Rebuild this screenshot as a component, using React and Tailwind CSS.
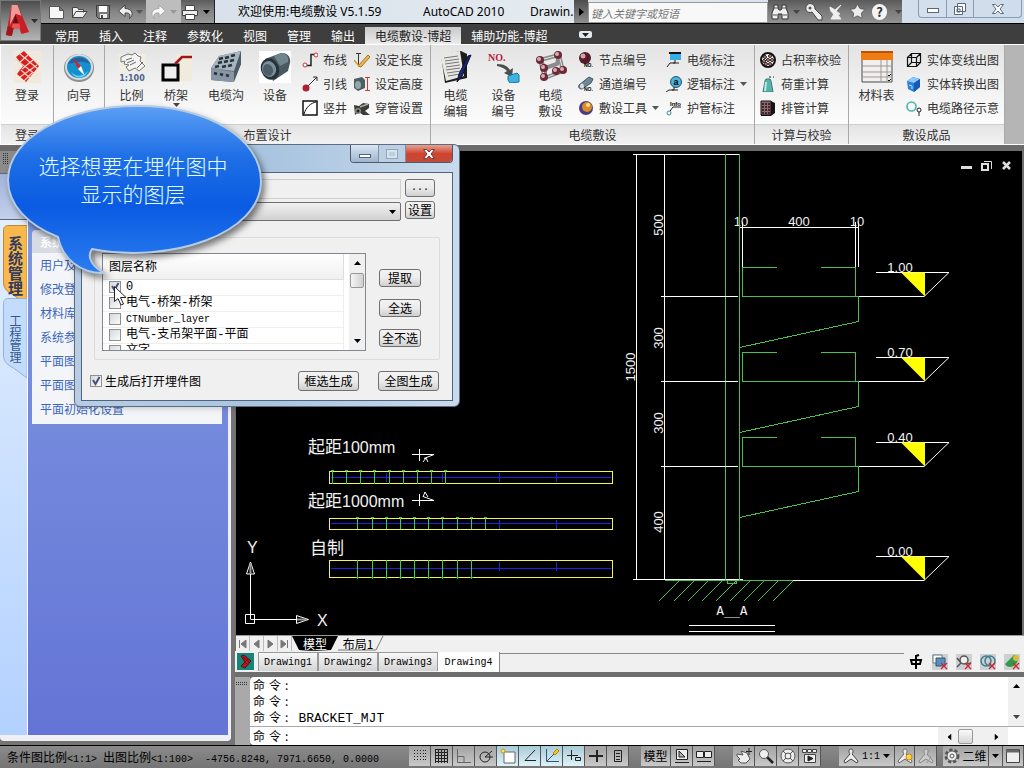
import { useState } from "react";
import { Star } from "lucide-react";

/* ---------- toolbar glyphs ---------- */

const Caret = ({ className = "fill-[#444]" }) => (
    <svg viewBox="0 0 7 4" className={`w-[7px] h-1 shrink-0 ${className}`}>
        <path d="M0 0h7L3.5 4z" />
    </svg>
);

const quickIcons = {
    new: <path d="M1.5 3.5h10l4 4v8h-14zM11.5 3.5v4h4" fill="#f6f6f6" stroke="#555" />,
    open: <path d="M1.5 14.5v-10h5l1 2h5v3M1.5 14.5l3.5-6h11l-4 6z" fill="#eee" stroke="#444" />,
    save: (
        <g>
            <path d="M2.5 2.5h13v13h-11l-2-2z" fill="#7a7a7a" stroke="#3c3c3c" />
            <path d="M5 3h8v6H5z" fill="#fff" />
            <path d="M6 11h7v4H6z" fill="#eee" />
            <path d="M7 12h2v3H7z" fill="#444" />
        </g>
    ),
    undo: <path d="M8 2L1.5 8 8 13.500V10c4-.5 6 1 4.500 5.500 5-4 2.500-10-4.500-10z" fill="#eee" stroke="#444" />,
    redo: <path d="M10 2l6.500 6-6.500 5.500V10c-4-.5-6 1-4.500 5.500-5-4-2.500-10 4.500-10z" fill="#f8f8f8" stroke="#a5a5a5" />,
    print: (
        <g stroke="#444">
            <path d="M4.5 2.5h9v5h-9z" fill="#fff" />
            <path d="M1.5 7.500h15v5h-15z" fill="#eee" />
            <path d="M4.5 11.5h9v5h-9z" fill="#fff" />
        </g>
    ),
};

const QuickButton = ({ name, className = "" }) => (
    <button type="button" aria-label={name} className={`h-full flex items-center ${className}`}>
        <svg viewBox="0 0 18 18" className="size-[18px]">{quickIcons[name]}</svg>
    </button>
);

/* ---------- ribbon icons ---------- */

const bigIcons = {
    login: (
        <g>
            <path d="M3 0h27v32H3z" fill="#f1eadc" />
            <path d="M5 6l8-6 15 15-13 16-9-8 6-8z" fill="#d81e1e" />
            <path d="M4 8l20 15M9 3l18 15M17 4L8 12M22 9L11 18M26 14L9 26M22 21l-9 9M10 19l9 8" stroke="#f6d5c8" strokeWidth="1.2" fill="none" />
        </g>
    ),
    guide: (
        <g>
            <ellipse cx="16" cy="17" rx="15" ry="14" fill="#8d8f8e" />
            <ellipse cx="16" cy="16" rx="14" ry="13" fill="#d5dcdb" />
            <ellipse cx="16" cy="16" rx="12" ry="11" fill="#1590cf" />
            <path d="M5 13a12 11 0 0 1 22 0c-8-4-15-2-22 0z" fill="#2a5f99" />
            <path d="M10 7l8 8-3 3z" fill="#d8232a" />
            <path d="M22 25l-4-10-3 3z" fill="#fff" />
            <path d="M8 21c5 5 12 5 17-1-3 8-13 9-17 1z" fill="#6ad0f2" />
        </g>
    ),
    ratio: (
        <g>
            <path d="M3 3h27v18H3z" fill="#f1ede2" />
            <path d="M5 6l7-3 4 1 3-2 3 3 3 1-1 4 5 5-6 5-4-3-6 3-3-4 3-2-5-1 1-3-4 1z" fill="#f4f4f4" stroke="#777" />
            <path d="M10 9l6-2m-5 5l7-3m-4 5l6-3m1 6l6-6" stroke="#666" fill="none" />
            <text x="16" y="30" textAnchor="middle" fontSize="8" fontWeight="700" fill="#4c6488" fontFamily="DejaVu Sans">1:100</text>
        </g>
    ),
    bridge: (
        <g>
            <path d="M16 3h16v27H16z" fill="#f1ebdc" />
            <path d="M3 14h15v15H3z" fill="#eee" stroke="#000" strokeWidth="3" />
            <path d="M15 13l7-7h10" fill="none" stroke="#a0161c" strokeWidth="2.5" />
        </g>
    ),
    trench: (
        <g>
            <path d="M9 5l22-5v13L22 31 1 29V17z" fill="#61727f" />
            <path d="M9 5l22-5-7 20L1 17z" fill="#a8b4bd" />
            <path d="M1 17l23 4v10L1 29z" fill="#8796a2" />
            <path d="M9 8l4-1M15 7l4-1M21 5l4-1M8 12l4-1M14 11l4-1M20 10l4-1M5 16l4-1M12 16l4-1M18 15l4-1M4 22l3 1m3 0l3 1m3 0l3 1" stroke="#26323c" strokeWidth="2.5" />
            <path d="M24 21l7-21v13l-7 18z" fill="#4a5a67" />
        </g>
    ),
    device: (
        <g>
            <path d="M0 0h32v32H0z" fill="#fff" />
            <path d="M6 8L22 2c7-1 10 5 9 10l-2 8-15 10z" fill="#485962" />
            <path d="M15 5l8-3c4 0 7 4 6 9l-8 4z" fill="#71858e" />
            <ellipse cx="11" cy="18" rx="9" ry="11" fill="#25323a" transform="rotate(-20 11 18)" />
            <ellipse cx="10" cy="18" rx="7" ry="8" fill="#7c9099" transform="rotate(-20 10 18)" />
            <ellipse cx="9" cy="19" rx="5" ry="6" fill="#4b5e67" transform="rotate(-20 9 19)" />
        </g>
    ),
    edit: (
        <g>
            <path d="M1 4l20-4 6 3v24l-22 5z" fill="#1d1d1d" />
            <path d="M0 3l20-3 4 25-18 5z" fill="#e7e7e4" />
            <path d="M4 7l14-2M5 10l14-2M5 13l14-2M6 16l14-2M6 19l14-2M7 22l14-2M8 25l12-2" stroke="#777" />
            <path d="M31 4l-9 21-5 6 2-8L28 5z" fill="#1b2670" stroke="#0b1038" />
        </g>
    ),
    number: (
        <g>
            <text x="0" y="10" fontSize="10" fontWeight="700" fill="#b8203c" fontFamily="Liberation Serif">NO.</text>
            <path d="M9 13c8 0 11 3 13 6l3-2-1 9-8-4 3-2c-3-3-6-4-10-5z" fill="#47504f" />
            <path d="M20 25l9-3 2 2v7l-9 1-2-3z" fill="#3fb2e4" stroke="#16749f" />
        </g>
    ),
    laying: (
        <g>
            <path d="M5 9L24 4M10 27l18-7M5 9l5 18M24 4l4 16M5 9l5 8 12-4 2-9M10 17v10" stroke="#8b8b8b" strokeWidth="4" fill="none" />
            <path d="M5 9L24 4l4 16-18 7z" stroke="#e3e3e3" fill="none" />
            {[[5, 9], [23, 4], [28, 19], [9, 26], [21, 20], [9, 17]].map(([cx, cy]) => (
                <g key={`${cx}-${cy}`}>
                    <circle cx={cx} cy={cy} r="4" fill="#6b2a38" />
                    <circle cx={cx - 1} cy={cy - 1} r="2" fill="#dbaab2" />
                </g>
            ))}
        </g>
    ),
    table: (
        <g>
            <path d="M1 1h30v30H1z" fill="#f2efec" stroke="#4a4a4a" />
            <path d="M0 0h32v9H0z" fill="#ef7b12" />
            <path d="M0 0h32v2H0z" fill="#b95305" />
            <path d="M1 15h30M1 21h30M1 26h30M20 9v21M26 9v21" stroke="#999" />
            <path d="M27 24l1 1 2-2M27 29l1 1 2-2" stroke="#111" fill="none" />
        </g>
    ),
};

const smallIcons = {
    wire: (
        <g fill="none" stroke="#222">
            <path d="M5 13.5h4v-11h4" strokeWidth="1.5" />
            <circle cx="3" cy="13" r="2" stroke="#c33" fill="#fff" />
            <circle cx="14" cy="3" r="2" stroke="#c33" fill="#fff" />
        </g>
    ),
    lead: (
        <g>
            <path d="M4 12L15 1m-4 0h4v4" stroke="#333" fill="none" />
            <circle cx="4" cy="12" r="3.5" fill="#b02035" />
        </g>
    ),
    shaft: (
        <g fill="#fff" stroke="#111">
            <path d="M1 1h14v14H1z" strokeWidth="1.5" />
            <path d="M2 14C4 7 9 3 14 2" fill="none" />
        </g>
    ),
    length: (
        <g>
            <path d="M4 14L14 3l2 2-9 10z" fill="#e9b452" stroke="#a8761f" />
            <path d="M2 1.5h5M4.500 2v12" stroke="#333" />
            <path d="M0 8l5 6" stroke="#d7a03c" strokeWidth="1.5" />
        </g>
    ),
    height: (
        <g>
            <path d="M0 3l8-2 3 3v8l-7 3-4-3z" fill="#4c5f63" />
            <ellipse cx="4" cy="9" rx="3" ry="4" fill="#93a6a8" />
            <path d="M13.5 1v14M11 1.5h5M11 14.5h5" stroke="#d8323a" />
        </g>
    ),
    pipe: (
        <g>
            <path d="M0 5l5 1 4-3 6 1v4l-4 3 5 4H9l-4-3-4 3z" fill="#3b3b38" />
            <circle cx="4" cy="11" r="3" fill="#8d8d87" />
            <circle cx="4" cy="11" r="1.5" fill="#222" />
            <path d="M6 7l8-3" stroke="#aaa" strokeWidth="1.5" />
        </g>
    ),
    node: (
        <g>
            <circle cx="7" cy="6" r="6" fill="#571a26" />
            <circle cx="5" cy="4" r="2.5" fill="#d4a3ac" />
            <text x="6" y="15" fontSize="5" fontWeight="700" fontFamily="Liberation Sans">NO.</text>
        </g>
    ),
    channel: (
        <g>
            <path d="M1 9L11 1l4 2-2 4-9 6c-3 0-4-2-3-4z" fill="#6e8a98" stroke="#3e5561" />
            <ellipse cx="4" cy="10" rx="2" ry="2.5" fill="#d4e1e7" />
            <text x="6" y="15" fontSize="5" fontWeight="700" fontFamily="Liberation Sans">NO.</text>
        </g>
    ),
    tool: (
        <g>
            <circle cx="8" cy="8" r="7" fill="#4d3a86" />
            <circle cx="9" cy="7" r="5" fill="#d98c22" />
            <circle cx="10" cy="5" r="2" fill="#fde38f" />
        </g>
    ),
    cableTag: (
        <g>
            <path d="M4 1h11v7H4z" fill="#34aee4" />
            <path d="M3 1h12" stroke="#111" strokeWidth="2" />
            <path d="M9 8v3H4l-3 4M7 11h6" fill="none" stroke="#222" />
        </g>
    ),
    logicTag: (
        <g>
            <circle cx="10" cy="6" r="5.5" fill="#4db3dd" stroke="#1c5674" />
            <text x="10" y="9" textAnchor="middle" fontSize="9" fontWeight="700" fontFamily="Liberation Sans">a</text>
            <path d="M8 11v3H3l-3 2M6 14h6" fill="none" stroke="#222" />
        </g>
    ),
    guardTag: (
        <g>
            <text x="4" y="6" fontSize="6" fontWeight="700" fontFamily="Liberation Sans">Info</text>
            <path d="M4 11l3-4h8" fill="none" stroke="#222" />
            <circle cx="3" cy="13" r="2" fill="#fff" stroke="#2f8fa3" />
        </g>
    ),
    ratioCheck: (
        <g>
            <circle cx="8" cy="8" r="7" fill="#fff" stroke="#111" strokeWidth="2" />
            {[[5, 5], [10, 4], [12, 8], [4, 9], [8, 8], [10, 12], [6, 12]].map(([cx, cy]) => (
                <circle key={`${cx}-${cy}`} cx={cx} cy={cy} r="1.5" fill="#d88" stroke="#222" />
            ))}
        </g>
    ),
    load: (
        <g>
            <path d="M5 5l1-2h4l1 2 2 11H3z" fill="#58b3a8" stroke="#2c7f78" />
            <path d="M6 6l-1 9" stroke="#bfe8e2" strokeWidth="2" />
            <path d="M9 1h2M13 1h1" stroke="#222" />
        </g>
    ),
    duct: (
        <g>
            <path d="M1 1h10l4 2v10l-4 3H1z" fill="#1b1214" />
            <path d="M1 1h10v14H1z" fill="#8d6a6f" stroke="#111" />
            {[3, 6, 9].map((x) => [3, 6, 9, 12].map((y) => (
                <circle key={`${x}-${y}`} cx={x} cy={y + 1} r="1" fill="#2b1114" />
            )))}
        </g>
    ),
    lineCube: (
        <path d="M1.5 5.5h9v9h-9zM1.5 5.500l4-4h9v9l-4 4M10.5 5.500l4-4M5.500 1.5v9h9M1.5 14.5l4-4" fill="none" stroke="#111" strokeWidth="1.2" />
    ),
    solidCube: (
        <g>
            <path d="M1 5l6-4 7 2v8l-6 5-6-3z" fill="#2a7fd8" />
            <path d="M1 5l6-4 7 2-6 4z" fill="#8cc8ff" />
            <path d="M8 7l6-4v8l-6 5z" fill="#155bb0" />
            <path d="M3 9l3 1v3" stroke="#bfe0ff" fill="none" />
        </g>
    ),
    path: (
        <g fill="none">
            <circle cx="5.5" cy="6.5" r="4.5" stroke="#48b8ac" strokeWidth="1.6" />
            <circle cx="13" cy="10" r="2" stroke="#222" />
            <path d="M13 12v4" stroke="#222" />
        </g>
    ),
};

const BigButton = ({ icon, lines, className, menu }) => (
    <button type="button" className={`flex flex-col items-center pt-[6px] shrink-0 ${className}`}>
        <svg viewBox="0 0 32 32" className="size-8">{bigIcons[icon]}</svg>
        <span className="mt-1 leading-4 text-center whitespace-nowrap">
            {lines.map((line) => <span key={line} className="block">{line}</span>)}
        </span>
        {menu && <Caret />}
    </button>
);

const SmallButton = ({ icon, label, menu }) => (
    <button type="button" className="flex items-center gap-[5px] h-6 whitespace-nowrap">
        <svg viewBox="0 0 16 16" className="size-4 shrink-0">{smallIcons[icon]}</svg>
        {label}
        {menu && <Caret className="fill-[#555]" />}
    </button>
);

const Panel = ({ title, className, children }) => (
    <section className={`flex flex-col shrink-0 border-r border-[#a9a9a9] bg-[#f1f1f1] ${className}`}>
        <div className="flex-1 flex bg-linear-to-b from-[#e3e3e3] via-[#f1f1f1] to-[#fcfcfc]">{children}</div>
        <h2 className="h-5 leading-5 text-center overflow-hidden whitespace-nowrap border-t border-[#cfcfcf] bg-linear-to-b from-[#e4e4e4] to-[#f2f2f2]">{title}</h2>
    </section>
);

const Stack = ({ className = "", children }) => (
    <div className={`flex flex-col pt-[3px] ${className}`}>{children}</div>
);

const menuTabs = ["常用", "插入", "注释", "参数化", "视图", "管理", "输出", "电缆敷设-博超", "辅助功能-博超"];

const Header = () => {
    const [active, setActive] = useState("电缆敷设-博超");

    return (
        <header className="flex h-11 shrink-0 bg-[#3e3e3e]">
            <button type="button" aria-label="AutoCAD" className="w-[41px] h-[41px] shrink-0 flex items-center gap-px pl-1 border border-[#777] bg-linear-to-b from-[#4d4d4d] via-[#858585] to-[#b5b5b5]">
                <svg viewBox="0 0 26 36" className="w-[25px] h-[35px]">
                    <path d="M7 2h6l12 28-8 2-2-6H9l-2 8-6-1z" fill="#c81f24" />
                    <path d="M7 2h6l4 11-6-2-6 12z" fill="#ef9a97" />
                    <path d="M11 12l3 9H8z" fill="#5e1013" />
                    <path d="M8 21h7l1 5H7z" fill="#ef5150" />
                    <path d="M1 33l6 1 2-8-6-2z" fill="#9d171b" />
                </svg>
                <Caret className="fill-[#2b2b2b]" />
            </button>
            <div className="flex-1 min-w-0 flex flex-col">
                <div className="h-6 flex items-stretch bg-linear-to-r from-[#d3dde6] via-[#e3eaf0] to-[#cfdceb] border-b border-black">
                    <div className="flex items-center w-[174px] shrink-0 pl-[7px] border-r border-[#222] bg-linear-to-b from-[#5c5c5c] via-[#858585] to-[#999]">
                        <QuickButton name="new" />
                        <QuickButton name="open" className="ml-[5px]" />
                        <QuickButton name="save" className="ml-[5px]" />
                        <QuickButton name="undo" className="ml-[5px]" />
                        <Caret className="ml-px mr-[3px] fill-[#555]" />
                        <div className="flex h-full items-center bg-[#bdbdbd] pl-[3px] pr-1">
                            <QuickButton name="redo" />
                            <Caret className="ml-[3px] fill-[#999]" />
                        </div>
                        <QuickButton name="print" />
                        <Caret className="ml-1 fill-black" />
                    </div>
                    <h1 className="flex-1 min-w-0 flex items-center pl-[23px] text-[12px] text-black whitespace-nowrap font-['Noto_Sans','Noto_Sans_CJK_SC',sans-serif]">
                        <span className="w-[185px] shrink-0">欢迎使用:电缆敷设 V5.1.59</span>
                        <span className="w-[107px] shrink-0">AutoCAD 2010</span>
                        <span>Drawin.</span>
                    </h1>
                    <button type="button" aria-label="展开" className="w-[14px] flex items-center justify-center bg-linear-to-b from-[#4c4c4c] to-[#8f8f8f]">
                        <svg viewBox="0 0 5 8" className="w-[5px] h-2"><path d="M0 0l5 4-5 4z" /></svg>
                    </button>
                    <input aria-label="搜索" placeholder="键入关键字或短语" className="w-[180px] h-[21px] mt-[2px] px-[2px] bg-[#f8f8f8] text-[11px] italic placeholder:text-[#777] border border-[#999]" />
                    <div className="w-[134px] shrink-0 flex items-center pl-[3px] bg-linear-to-b from-[#5a5a5a] via-[#7c7c7c] to-[#929292] text-[#eee]">
                        <button type="button" aria-label="查找">
                            <svg viewBox="0 0 18 18" className="size-[18px]">
                                <path d="M3 2h4v3l1 2h2l1-2V2h4v3l2 5v6h-6v-5H7v5H1v-6l2-5z" fill="#eee" stroke="#333" />
                                <path d="M2 12h4m6 0h4M3 5h4m4 0h4" stroke="#555" />
                            </svg>
                        </button>
                        <Caret className="ml-1 fill-[#444]" />
                        <button type="button" aria-label="密钥" className="ml-1">
                            <svg viewBox="0 0 20 20" className="size-5">
                                <path d="M3 3c3-3 8-1 8 4l7 7v4h-4l-6-8C3 12 0 7 3 3z" fill="#eee" stroke="#444" />
                                <circle cx="6" cy="6" r="1.5" fill="#555" />
                            </svg>
                        </button>
                        <button type="button" aria-label="通讯中心" className="ml-[3px]">
                            <svg viewBox="0 0 18 18" className="size-[18px]">
                                <path d="M3 4c0 6 5 9 10 7L9 8l5-6-6 5zM7 11l-3 5h10l-3-4" fill="#eee" stroke="#eee" />
                            </svg>
                        </button>
                        <button type="button" aria-label="收藏夹" className="ml-1"><Star size={17} className="fill-[#eee] stroke-[#444]" strokeWidth={1} /></button>
                        <button type="button" aria-label="帮助" className="ml-[6px] size-4 rounded-full bg-[#f4f4f4] text-[#333] text-[13px] leading-4 font-bold">?</button>
                        <Caret className="ml-2 fill-[#444]" />
                    </div>
                    <div className="w-[122px] shrink-0 pl-4 pr-[2px]">
                        <div className="flex h-[18px] rounded-b border border-t-0 border-[#8d9bb0]">
                            <button type="button" aria-label="最小化" className="w-7 flex items-center justify-center border-r border-[#8d9bb0]">
                                <span className="w-3 h-[5px] mt-1 border border-[#5b6780] bg-white" />
                            </button>
                            <button type="button" aria-label="还原" className="w-[27px] flex items-center justify-center border-r border-[#8d9bb0]">
                                <svg viewBox="0 0 12 12" className="size-3" fill="#fff" stroke="#5b6780"><path d="M3.5.5h8v8h-8zM.5 3.5h8v8h-8zM3 6h3v3H3z" /></svg>
                            </button>
                            <button type="button" aria-label="关闭" className="flex-1 flex items-center justify-center">
                                <svg viewBox="0 0 12 10" className="w-3 h-[10px]"><path d="M.5.5h3L6 3l2.500-2.500h3L8 5l3.500 4.500h-3L6 7 3.500 9.500h-3L4 5z" fill="#fff" stroke="#5b6780" /></svg>
                            </button>
                        </div>
                    </div>
                </div>
                <nav className="flex-1 flex items-end pl-1 text-white text-[12px]">
                    {menuTabs.map((tab) => (
                        <button
                            key={tab}
                            type="button"
                            onClick={() => setActive(tab)}
                            className={`h-[17px] leading-4 px-[10px] whitespace-nowrap ${
                                tab === active ? "bg-linear-to-b from-[#c9c9c9] to-[#ececec] text-[#222]" : ""
                            }`}
                        >
                            {tab}
                        </button>
                    ))}
                    <button type="button" aria-label="最小化功能区" className="ml-[22px] mb-[6px] w-[13px] h-[7px] rounded-xs bg-[#e6e8f0] flex items-center justify-center">
                        <Caret className="fill-[#222]" />
                    </button>
                </nav>
            </div>
        </header>
    );
};

const Ribbon = () => (
    <div className="h-[101px] shrink-0 flex border-y border-l border-white bg-linear-to-r from-[#999] to-[#b5b5b5] text-[12px] text-[#333]">
        <Panel title="登录" className="w-[53px]">
            <BigButton icon="login" lines={["登录"]} className="w-full" />
        </Panel>
        <Panel title="" className="w-[51px]">
            <BigButton icon="guide" lines={["向导"]} className="w-full" />
        </Panel>
        <Panel title="布置设计" className="w-[326px]">
            <BigButton icon="ratio" lines={["比例"]} className="w-[53px]" />
            <BigButton icon="bridge" lines={["桥架"]} className="w-9" menu />
            <BigButton icon="trench" lines={["电缆沟"]} className="w-16" />
            <BigButton icon="device" lines={["设备"]} className="w-[34px]" />
            <Stack className="ml-[10px]">
                <SmallButton icon="wire" label="布线" />
                <SmallButton icon="lead" label="引线" />
                <SmallButton icon="shaft" label="竖井" />
            </Stack>
            <Stack className="ml-[7px]">
                <SmallButton icon="length" label="设定长度" />
                <SmallButton icon="height" label="设定高度" />
                <SmallButton icon="pipe" label="穿管设置" />
            </Stack>
        </Panel>
        <Panel title="电缆敷设" className="w-[324px]">
            <BigButton icon="edit" lines={["电缆", "编辑"]} className="w-[49px]" />
            <BigButton icon="number" lines={["设备", "编号"]} className="w-[47px]" />
            <BigButton icon="laying" lines={["电缆", "敷设"]} className="w-[47px]" />
            <Stack className="ml-[4px] w-[88px]">
                <SmallButton icon="node" label="节点编号" />
                <SmallButton icon="channel" label="通道编号" />
                <SmallButton icon="tool" label="敷设工具" menu />
            </Stack>
            <Stack>
                <SmallButton icon="cableTag" label="电缆标注" />
                <SmallButton icon="logicTag" label="逻辑标注" menu />
                <SmallButton icon="guardTag" label="护管标注" />
            </Stack>
        </Panel>
        <Panel title="计算与校验" className="w-[94px]">
            <Stack className="ml-[5px]">
                <SmallButton icon="ratioCheck" label="占积率校验" />
                <SmallButton icon="load" label="荷重计算" />
                <SmallButton icon="duct" label="排管计算" />
            </Stack>
        </Panel>
        <Panel title="敷设成品" className="w-[156px]">
            <BigButton icon="table" lines={["材料表"]} className="w-[55px]" />
            <Stack className="ml-[2px]">
                <SmallButton icon="lineCube" label="实体变线出图" />
                <SmallButton icon="solidCube" label="实体转换出图" />
                <SmallButton icon="path" label="电缆路径示意" />
            </Stack>
        </Panel>
    </div>
);

/* ---------- side palette ---------- */

const sideLinks = ["用户及", "修改登", "材料库", "系统参", "平面图", "平面图", "平面初始化设置"];

const VerticalTab = ({ label, active }) => (
    <button type="button" className={`relative w-6 flex justify-center pt-2 leading-6 ${active ? "h-[73px] text-[15px] text-[#2f3a5c] font-bold" : "h-[74px] text-[12px] text-[#35578f]"}`}>
        <svg viewBox="0 0 24 84" preserveAspectRatio="none" className="absolute left-0 top-0 w-6 h-[84px]">
            <path
                d="M24 .5H6C2 .5.5 2 .5 6v50c0 8 3 10 10 14L24 80z"
                fill={active ? "#f9b84c" : "#c3dcfb"}
                stroke={active ? "#b98a3c" : "#94b2dc"}
            />
        </svg>
        <span className="relative [writing-mode:vertical-rl]">{label}</span>
    </button>
);

const SidePalette = () => (
    <aside className="w-[235px] shrink-0 flex flex-col bg-[#747474]">
        <div className="h-[22px] pt-[2px] pl-[3px] bg-[#8b8b8b]">
            <svg viewBox="0 0 6 14" className="w-[6px] h-[14px]" stroke="#333" strokeDasharray="1 1"><path d="M.5 0v12M2.5 0v12M4.5 0v12" /></svg>
        </div>
        <div className="h-[47px] mr-[5px] border-y border-[#5f6675] bg-linear-to-b from-[#a2b3d9] to-[#c2d0ec]" />
        <div className="flex-1 min-h-0 flex mr-1 mb-1 rounded-b border-r-[3px] border-b-[6px] border-[#eef0f6] bg-[#dfe9f8]">
            <div className="w-7 shrink-0 pl-[3px] pt-[5px] flex flex-col bg-linear-to-b from-[#e3effd] to-[#b3d1ff] border-r border-white">
                <VerticalTab label="系统管理" active />
                <VerticalTab label="工程管理" />
            </div>
            <div className="flex-1 p-1 pt-[10px] bg-linear-to-b from-[#7f98e0] to-[#6474d6]">
                <h3 className="h-[23px] leading-6 pl-2 rounded-t bg-linear-to-r from-[#d6dae3] to-[#eceef4] text-white text-[12px] font-bold">系统管理</h3>
                <ul className="w-[190px] pb-[3px] bg-[#f4f5f9] text-[12px] text-[#3a66bd]">
                    {sideLinks.map((text, i) => (
                        <li key={i} className="h-6 pl-2 leading-6"><a href="#">{text}</a></li>
                    ))}
                </ul>
            </div>
        </div>
    </aside>
);

/* ---------- drawing area ---------- */

const shelves = [
    { base: 296, level: "1.00" },
    { base: 381, level: "0.70" },
    { base: 466, level: "0.40" },
];

const rails = [
    { top: 471, h: 12, from: 470, to: 484, bars: [332, 346, 360, 374, 389, 403, 417, 431, 445], ticks: [386, 442, 499, 556], cap: 470 },
    { top: 518, h: 11, from: 517, to: 529, bars: [357, 372, 386, 400, 414, 428, 442, 457, 471, 485], ticks: [499, 556], cap: 517 },
    { top: 560, h: 17, from: 560, to: 579, bars: [357, 372, 386, 400, 414, 428, 442, 457, 471], ticks: [499, 556], cap: 577 },
];

const sideDims = [["500", 658, 225], ["300", 658, 338], ["300", 658, 423], ["400", 658, 522], ["1500", 630, 367]];
const hatches = [659, 674, 688, 702, 716, 730, 744, 758, 773];

const Level = ({ y, text }) => (
    <g>
        <path d={`M876 ${y - 24}h73l-25 24`} fill="none" stroke="#fff" />
        <path d={`M901 ${y - 24}h24v24z`} fill="#ffff00" />
        <text x="900" y={y - 25} textAnchor="middle">{text}</text>
    </g>
);

const Drawing = () => (
    <svg viewBox="236 151 786 484" preserveAspectRatio="xMinYMin slice" className="w-full h-full" fontFamily="'Liberation Sans','Noto Sans CJK SC',sans-serif" fontSize="13" fill="#f2f2f2">
        <g fill="none" stroke="#fff" shapeRendering="crispEdges">
            <path d="M633 154.5h106M636.5 154v425M664.5 154v425M633 579.5h110M740 580.5h184" />
            <path d="M740 227.5h118M739.5 222v45M742.5 222v45M855.5 222v45M858.5 222v45" />
            <path d="M689 625.5h86M689 631.5h86" />
        </g>
        {sideDims.map(([text, x, y]) => (
            <text key={`${text}-${y}`} transform={`translate(${x + 5} ${y}) rotate(-90)`} textAnchor="middle">{text}</text>
        ))}
        <text x="741" y="226" textAnchor="middle">10</text>
        <text x="799" y="226" textAnchor="middle">400</text>
        <text x="857" y="226" textAnchor="middle">10</text>
        <text x="732" y="615" textAnchor="middle" fontSize="13" fontFamily="DejaVu Sans Mono">A__A</text>
        <g fill="none" stroke="#48c04c" shapeRendering="crispEdges">
            <path d="M725.5 154v426M739.5 154v426M665 580.5h128M727.5 580.5v3h9v-3" />
            {hatches.map((x) => <path key={x} d={`M${x} 601l20-20`} />)}
        </g>
        {shelves.map(({ base, level }) => (
            <g key={base}>
                <g fill="none" shapeRendering="crispEdges">
                    <path d={`M661 ${base + 0.5}h77M858 ${base + 0.5}h66`} stroke="#fff" />
                    <path
                        d={`M777 ${base - 28.5}h-34.5v29M821 ${base - 28.5}h34.5v29M742 ${base + 0.5}h116.5v25l-119 26`}
                        stroke="#48c04c"
                    />
                </g>
                <Level y={base + 0.5} text={level} />
            </g>
        ))}
        <Level y={580.5} text="0.00" />
        {rails.map((rail) => (
            <g key={rail.top} fill="none" shapeRendering="crispEdges">
                <path d={`M331 ${rail.top + Math.floor(rail.h / 2) + 0.5}h280`} stroke="#2020e0" />
                {rail.ticks.map((x) => <path key={x} d={`M${x + 0.5} ${rail.top + 2}v9`} stroke="#2020e0" />)}
                <rect x="329.5" y={rail.top + 0.5} width="283" height={rail.h} stroke="#f4f45a" />
                {rail.bars.map((x) => (
                    <g key={x} stroke="#3fce4a">
                        <path d={`M${x + 0.5} ${rail.from}V${rail.to}`} />
                        <path d={`M${x - 1} ${rail.cap + 0.5}h3`} />
                    </g>
                ))}
            </g>
        ))}
        <g fontSize="17">
            <text x="308" y="453">起距<tspan fontSize="16">100mm</tspan></text>
            <text x="308" y="507">起距<tspan fontSize="16">1000mm</tspan></text>
            <text x="310" y="554">自制</text>
            <text x="247" y="553" fontSize="16">Y</text>
            <text x="317" y="626" fontSize="16">X</text>
        </g>
        <g fill="none" stroke="#fff">
            <path d="M412 454.5h22l-10 4M419.5 449v12M423 462l3-4 2 4" />
            <path d="M412 500.5h22l-11-4M419.5 494v12M423 497l2-5 3 5" />
            <path d="M245.5 614.5h9v9h-9zM250.5 619v-45M250.5 619.5h46M246.5 574l4-12 4 12zM296.5 615.5l12 4-12 4z" />
            <path d="M250.5 563v11M297 619.5h10" stroke="#999" strokeWidth="2" />
        </g>
    </svg>
);

const fileTabs = ["Drawing1", "Drawing2", "Drawing3", "Drawing4"];

const navArrows = [
    ["第一个", "M2.5 1v8M9 1L4 5l5 4z"],
    ["上一个", "M8 1L3 5l5 4z"],
    ["下一个", "M3 1l5 4-5 4z"],
    ["最后一个", "M2 1l5 4-5 4zM8.5 1v8"],
];

const trayIcons = [
    <path key="cad" d="M3 6h10l-1 4H4zM8 1v14M8 2l3-1" stroke="#000" strokeWidth="2" fill="none" />,
    <g key="win"><path d="M1 1h9v8H1z" fill="#fff" stroke="#678" /><path d="M4 4h9v8H4z" fill="#5590c0" stroke="#356" /></g>,
    <g key="find" fill="none" stroke="#555" strokeWidth="1.5"><path d="M1 4l4 5-4 4M11 10l4-1" /><circle cx="8" cy="6" r="4" fill="#eee" /></g>,
    <g key="link" fill="none" stroke="#3c7c8e" strokeWidth="1.5"><circle cx="6" cy="7" r="5" /><circle cx="10" cy="7" r="5" /></g>,
    <g key="ball"><path d="M1 10L10 1c5 0 5 6 2 9-3 4-9 4-11 0z" fill="#2f9a4b" /><circle cx="12" cy="4" r="3" fill="#d9bb3a" /></g>,
];

const Prompt = () => (
    <span className="inline-flex gap-1 text-[12px]">
        <span>命</span>
        <span>令</span>
        <span>:</span>
    </span>
);

const Workspace = () => {
    const [file, setFile] = useState("Drawing4");

    return (
        <main className="flex-1 min-w-0 flex flex-col bg-[#6e6e6e]">
            <div className="relative flex-1 min-h-0 ml-px mr-[2px] bg-black">
                <Drawing />
                <div className="absolute right-[10px] top-[9px] flex gap-[9px]">
                    <button type="button" aria-label="最小化图形"><svg viewBox="0 0 11 11" className="size-[11px]"><path d="M0 6h11v3H0z" fill="#ddd" /></svg></button>
                    <button type="button" aria-label="还原图形"><svg viewBox="0 0 11 11" className="size-[11px]" fill="none" stroke="#ddd"><path d="M1 4h6v6H1z" strokeWidth="2" /><path d="M3 1.5h7.5V9" /></svg></button>
                    <button type="button" aria-label="关闭图形"><svg viewBox="0 0 11 11" className="size-[11px]"><path d="M2 2l7 7M9 2L2 9" stroke="#ddd" strokeWidth="2.5" /></svg></button>
                </div>
            </div>
            <div className="h-4 shrink-0 flex ml-px bg-[#f0f0f0] border-t border-[#999] text-[12px] leading-[15px]">
                {navArrows.map(([label, d]) => (
                    <button key={label} type="button" aria-label={label} className="w-[14px] flex items-center justify-center border-r border-[#bbb]">
                        <svg viewBox="0 0 11 10" className="w-[11px] h-[10px]" fill="#777" stroke="#777"><path d={d} /></svg>
                    </button>
                ))}
                <button type="button" className="relative w-[46px] text-white">
                    <svg viewBox="0 0 46 15" className="absolute inset-0 size-full"><path d="M0 0h46l-7 14c-12 1-25 1-32 0z" /></svg>
                    <span className="relative">模型</span>
                </button>
                <button type="button" className="relative w-[48px] pr-2 text-black">
                    <svg viewBox="0 0 48 15" className="absolute inset-0 size-full" fill="none" stroke="#777"><path d="M0 14h38l7-14" /></svg>
                    <span className="relative">布局1</span>
                </button>
            </div>
            <div className="h-[21px] shrink-0 flex bg-[#f0f0f0] text-black">
                <svg viewBox="0 0 17 17" className="size-[17px] ml-[2px] mt-[2px] mr-1 shrink-0">
                    <path d="M0 0h17v17H0z" fill="#15857b" />
                    <path d="M4 3l3-1 7 6-6 7-4-2 4-4z" fill="#b9161b" stroke="#5d0a0d" />
                    <path d="M6 4l6 5M11 6l-3 3M10 11l-3-2" stroke="#6d0c10" />
                </svg>
                {fileTabs.map((name) => (
                    <button
                        key={name}
                        type="button"
                        onClick={() => setFile(name)}
                        className={`font-['Liberation_Mono',monospace] text-[10px] whitespace-nowrap ${
                            name === file
                                ? "w-[62px] mt-px bg-white border-r border-[#888]"
                                : "w-[60px] h-[19px] mt-px border-t border-x border-[#999] bg-linear-to-b from-[#f8f8f8] to-[#d4d4d4]"
                        }`}
                    >
                        {name}
                    </button>
                ))}
                <div className="flex-1 mt-[2px] border-t border-[#888]" />
                <div className="flex items-center gap-2 pl-1 pr-1">
                    {trayIcons.map((icon, i) => (
                        <svg key={i} viewBox="0 0 16 16" className={`size-4 ${i > 0 ? "bg-[#cdd0d2]" : ""}`}>
                            {icon}
                            {i > 0 && <path d="M9 9l6 6M15 9l-6 6" stroke="#d8222e" strokeWidth="1.3" />}
                        </svg>
                    ))}
                </div>
            </div>
            <div className="h-[73px] shrink-0 pt-[5px] flex">
                <div className="w-[15px] pt-[5px] pl-px bg-[#a9a9a9]">
                    <svg viewBox="0 0 12 4" className="w-3 h-1" stroke="#333" strokeDasharray="1 1"><path d="M0 .5h12M0 2.5h12" /></svg>
                </div>
                <div className="flex-1 flex flex-col rounded-l bg-white text-black text-[13px]">
                    <div className="h-[50px] flex border-b border-[#aaa]">
                        <div className="flex-1 pl-[3px] leading-4">
                            <p><Prompt /></p>
                            <p><Prompt /></p>
                            <p><Prompt /><span className="ml-[10px] font-['Liberation_Mono',monospace]">BRACKET_MJT</span></p>
                        </div>
                        <div className="w-4 flex flex-col items-center justify-between py-[7px] bg-[#f0f0f0]">
                            <Caret className="rotate-180" />
                            <Caret />
                        </div>
                    </div>
                    <div className="flex-1 flex">
                        <label htmlFor="cmd" className="pl-[3px] leading-[17px]"><Prompt /></label>
                        <input id="cmd" className="flex-1 min-w-0 px-2 outline-none font-['Liberation_Mono',monospace]" />
                        <div className="w-[70px] mr-4 flex items-center justify-between px-2 bg-[#f0f0f0]">
                            <Caret className="rotate-90" />
                            <span className="w-[15px] h-[15px] mr-4 border border-[#999] rounded-xs bg-linear-to-b from-[#fafafa] to-[#d6d6d6]" />
                            <Caret className="-rotate-90" />
                        </div>
                    </div>
                </div>
            </div>
        </main>
    );
};

/* ---------- status bar ---------- */

const modes = [
    { name: "捕捉", art: <path d="M2 2.5h10M2 5.5h10M2 8.5h10M2 11.5h10M13.5 2v12" strokeDasharray="1 2" /> },
    { name: "栅格", art: <path d="M1.5 1v14M4.5 1v14M7.5 1v14M10.5 1v14M13.5 1v14M1 1.5h13M1 4.5h13M1 7.5h13M1 10.5h13M1 13.5h13" /> },
    { name: "正交", art: <path d="M1.5 1v13.5H15M2 8.5h6v6" stroke="#666" /> },
    { name: "极轴", art: <g><circle cx="7" cy="9" r="5" /><path d="M14 3L7 9h8" /></g> },
    { name: "对象捕捉", on: true, art: <g><path d="M4 4h11v11H4z" fill="#fff" stroke="#666" /><circle cx="3" cy="3" r="2" stroke="#c90" fill="#fd8" /></g> },
    { name: "对象追踪", on: true, art: <path d="M13 2L3 12.5h11" /> },
    { name: "动态UCS", on: true, art: <g stroke="#357"><path d="M2.5 1v12.5H15M3 13L12 4" /><path d="M9 5l4-4 2 2-4 4z" fill="#fb3" stroke="#b80" /></g> },
    { name: "动态输入", on: true, art: <path d="M1 7.5h11M5.5 2v10M9.5 9.5h5v3h-5z" /> },
    { name: "线宽", art: <path d="M1 8h14M9 2v12" strokeWidth="2" /> },
    { name: "快捷特性", art: <path d="M4.5 2.5h7v11h-7zM6 5.5h4M6 8.5h4M6 11.5h4" /> },
];

const StatusIcon = ({ name, on, children, className = "w-[22px]" }) => (
    <button
        type="button"
        aria-label={name}
        className={`h-full shrink-0 flex items-center justify-center border-r border-[#555] ${
            on ? "bg-linear-to-b from-[#a8cbd9] to-[#e0f2f8]" : "bg-linear-to-b from-[#a2a2a2] to-[#c9c9c9]"
        } ${className}`}
    >
        {children}
    </button>
);

const Glyph = ({ children }) => (
    <svg viewBox="0 0 16 16" className="size-4" fill="none" stroke="#222">{children}</svg>
);

const person = "M8 1c3 0 2 4 1 5l6 7-1 2-6-4-6 4-1-2 6-7C6 5 5 1 8 1z";

const StatusBar = () => (
    <footer className="h-[23px] shrink-0 flex items-stretch pb-[2px] border-t border-black bg-linear-to-b from-[#8a8a8a] to-[#757575] text-[12px] text-black">
        <p className="flex-1 min-w-0 pl-[7px] leading-[22px] whitespace-pre overflow-hidden">
            条件图比例<span className="font-['Liberation_Mono',monospace] text-[10px]">&lt;1:1&gt; </span>
            出图比例<span className="font-['Liberation_Mono',monospace] text-[10px]">&lt;1:100&gt;  -4756.8248, 7971.6650, 0.0000</span>
        </p>
        {modes.map(({ name, on, art }) => (
            <StatusIcon key={name} name={name} on={on}><Glyph>{art}</Glyph></StatusIcon>
        ))}
        <span className="w-3 shrink-0" />
        <StatusIcon name="模型空间" className="w-[30px]">模型</StatusIcon>
        <StatusIcon name="快速查看布局"><Glyph><path d="M2.5 1.5h11v10h-11zM1 14.5h14M5 3v6h6z" fill="#eee" /></Glyph></StatusIcon>
        <StatusIcon name="快速查看图形"><Glyph><path d="M.5 3.5h7v6h-7zM8.5 3.5h7v6h-7zM1 13.5h14" fill="#eee" /></Glyph></StatusIcon>
        <span className="w-[18px] shrink-0" />
        <StatusIcon name="平移"><Glyph><path d="M1 6l6 1-2-4 6 2 3 6-4 4H5L2 12l2-1-3-3z" fill="#eee" stroke="#555" /><path d="M13 0v7M10 3.5h6" /></Glyph></StatusIcon>
        <StatusIcon name="缩放"><Glyph><path d="M9 9l6 6" strokeWidth="2.5" /><circle cx="6" cy="6" r="4.5" fill="#eee" stroke="#555" /></Glyph></StatusIcon>
        <StatusIcon name="导航控制盘"><Glyph><circle cx="8" cy="8" r="7" fill="#eee" stroke="#555" /><circle cx="8" cy="8" r="3" stroke="#555" /><path d="M3 3l3 3M13 3l-3 3M3 13l3-3M13 13l-3-3" stroke="#555" /></Glyph></StatusIcon>
        <StatusIcon name="运动展示"><Glyph><path d="M.5 1.5h4v3h-4zM5.5 1.5h4v3h-4zM10.5 1.5h4v3h-4zM2.5 6.5h11v8h-11z" fill="#eee" stroke="#444" /><path d="M6 8l5 2.5L6 13z" fill="#222" /></Glyph></StatusIcon>
        <span className="w-[18px] shrink-0" />
        <StatusIcon name="注释比例" className="w-14 gap-[3px]">
            <Glyph><path d={person} fill="#eee" stroke="#444" /></Glyph>
            <span className="font-['Liberation_Mono',monospace] text-[10px]">1:1</span>
            <Caret className="fill-black" />
        </StatusIcon>
        <StatusIcon name="注释可见性" className="w-5"><Glyph><path d={person} fill="#eee" stroke="#666" /><circle cx="12" cy="9" r="3" fill="#ffd24a" stroke="#c98a12" /></Glyph></StatusIcon>
        <StatusIcon name="自动添加比例"><Glyph><path d={person} fill="#ccc" stroke="#888" /><path d="M12 1l-3 6 4 2-4 6" stroke="#999" /></Glyph></StatusIcon>
        <span className="w-[6px] shrink-0" />
        <StatusIcon name="切换工作空间" className="w-[46px] gap-[2px]">
            <Glyph><circle cx="8" cy="8" r="6" stroke="#555" strokeWidth="3" strokeDasharray="3 2" /><circle cx="8" cy="8" r="5" fill="#eee" stroke="#555" /><circle cx="8" cy="8" r="2" stroke="#555" /></Glyph>
            二维
        </StatusIcon>
        <StatusIcon name="工作空间列表" className="w-[14px]"><Caret className="fill-black" /></StatusIcon>
        <StatusIcon name="全屏显示" className="w-[21px]"><Glyph><path d="M1.5 1.5h13v13h-13z" fill="#eee" stroke="#444" /><path d="M1 3h13" strokeWidth="3" stroke="#666" /></Glyph></StatusIcon>
    </footer>
);

/* ---------- dialog ---------- */

const Tick = ({ id, checked, onChange, label }) => (
    <span className="relative size-3 inline-block shrink-0">
        <input
            id={id}
            type="checkbox"
            aria-label={label}
            checked={checked}
            onChange={onChange}
            className="peer appearance-none block size-3 border border-[#8e8f8f] bg-linear-to-br from-[#d5d8da] to-[#fbfbfb]"
        />
        <svg viewBox="0 0 12 12" className="hidden peer-checked:block absolute inset-0 size-3 pointer-events-none">
            <path d="M3 5l2.5 4 4-7" fill="none" stroke="#45507f" strokeWidth="2" />
        </svg>
    </span>
);

const DialogButton = ({ children, className }) => (
    <button type="button" className={`flex items-center justify-center rounded-[3px] border border-[#707070] bg-linear-to-b from-[#f3f3f3] via-[#ebebeb] to-[#cfcfcf] leading-none ${className}`}>
        {children}
    </button>
);

const layers = [
    { name: "0" },
    { name: "电气-桥架-桥架" },
    { name: "CTNumber_layer", latin: true },
    { name: "电气-支吊架平面-平面" },
    { name: "文字" },
];

const LayerDialog = () => {
    const [checked, setChecked] = useState(["0"]);
    const [openAfter, setOpenAfter] = useState(true);

    const toggle = (name) => {
        setChecked((prev) => (prev.includes(name) ? prev.filter((n) => n !== name) : [...prev, name]));
    };

    return (
        <div role="dialog" aria-label="埋件图" className="absolute left-[74px] top-36 w-[386px] px-[6px] pb-[5px] rounded-md border border-[#5d6c80] bg-linear-to-r from-[#b8cde3] via-[#a9c4df] to-[#c9daec] text-[12px] text-black shadow-md">
            <div className="h-[27px] flex justify-end items-start">
                <div className="flex h-[18px] rounded-b border border-t-0 border-[#4c5a6e] overflow-hidden">
                    <button type="button" aria-label="最小化" className="w-7 flex items-center justify-center border-r border-[#7f90a6] bg-linear-to-b from-[#dbe6f2] to-[#9fb5cf]"><span className="w-3 h-1 mt-1 border border-[#56647a] bg-white" /></button>
                    <button type="button" aria-label="最大化" className="w-[27px] flex items-center justify-center border-r border-[#7f90a6] bg-[#bccfe3]"><span className="w-[10px] h-2 border-2 border-[#d8e3ee] outline outline-[#92a5bc]" /></button>
                    <button type="button" aria-label="关闭" className="w-[46px] flex items-center justify-center bg-linear-to-b from-[#e3a093] via-[#cf4430] to-[#c44a38]">
                        <svg viewBox="0 0 12 10" className="w-3 h-[10px]"><path d="M.5.5h3L6 3l2.5-2.5h3L8 5l3.5 4.5h-3L6 7 3.500 9.500h-3L4 5z" fill="#fff" stroke="#6b3a3a" /></svg>
                    </button>
                </div>
            </div>
            <div className="border border-[#4f6480] bg-[#f0f0f0] pl-2 pr-3 pt-[6px] pb-[9px]">
                <div className="flex gap-1 pl-1 pr-[5px]">
                    <div className="flex-1 flex flex-col gap-[3px]">
                        <input aria-label="路径" disabled className="h-5 border border-[#cfcfcf] bg-[#f0f0f0]" />
                        <div className="relative h-[19px]">
                            <select aria-label="图幅" className="appearance-none w-full h-full rounded-xs border border-[#707070] bg-linear-to-b from-[#f1f1f1] to-[#d2d2d2]" />
                            <Caret className="absolute right-[5px] top-2 fill-black pointer-events-none" />
                        </div>
                    </div>
                    <div className="flex flex-col gap-1">
                        <DialogButton className="w-[30px] h-[18px] font-['Liberation_Mono',monospace] text-[10px]">...</DialogButton>
                        <DialogButton className="w-[30px] h-[18px]">设置</DialogButton>
                    </div>
                </div>
                <div className="mt-4 ml-1 pt-[15px] pb-2 pl-[7px] flex border border-[#dcdcdc] rounded-xs">
                    <div className="flex h-[98px] w-[264px] overflow-hidden border border-[#828790] bg-white">
                        <table className="flex-1 border-collapse self-start">
                            <thead>
                                <tr className="h-[25px] bg-linear-to-b from-white to-[#f0f0f0]">
                                    <th className="pl-[6px] text-left font-normal border-b border-r border-[#ddd]">图层名称</th>
                                </tr>
                            </thead>
                            <tbody>
                                {layers.map(({ name, latin }) => (
                                    <tr key={name} className="h-4 border-b border-[#eee]">
                                        <td className="h-4 p-0 pl-[6px] border-r border-[#eee]">
                                            <label className="flex items-center gap-[5px] h-[15px] leading-[15px] whitespace-nowrap">
                                                <Tick checked={checked.includes(name)} onChange={() => toggle(name)} label={name} />
                                                <span className={latin ? "font-['Liberation_Mono',monospace] text-[10px]" : "font-['Liberation_Mono','Noto_Sans_CJK_SC',monospace]"}>{name}</span>
                                            </label>
                                        </td>
                                    </tr>
                                ))}
                            </tbody>
                        </table>
                        <div className="w-4 ml-[5px] flex flex-col items-center py-[7px] bg-[#f0f0f0]">
                            <Caret className="rotate-180" />
                            <span className="mt-2 w-[14px] h-[15px] shrink-0 rounded-xs border border-[#999] bg-linear-to-r from-[#f5f5f5] to-[#d0d0d0]" />
                            <Caret className="mt-auto" />
                        </div>
                    </div>
                    <div className="ml-[13px] pt-4 flex flex-col gap-3">
                        <DialogButton className="w-[42px] h-[18px]">提取</DialogButton>
                        <DialogButton className="w-[42px] h-[18px]">全选</DialogButton>
                        <DialogButton className="w-[42px] h-[18px]">全不选</DialogButton>
                    </div>
                </div>
                <div className="mt-[11px] flex items-center">
                    <Tick id="open-after" checked={openAfter} onChange={() => setOpenAfter(!openAfter)} />
                    <label htmlFor="open-after" className="ml-[3px] mr-auto">生成后打开埋件图</label>
                    <DialogButton className="w-[61px] h-5 mr-[19px]">框选生成</DialogButton>
                    <DialogButton className="w-[61px] h-5 mr-px">全图生成</DialogButton>
                </div>
            </div>
        </div>
    );
};

const Callout = () => (
    <div className="absolute left-1 top-[102px] w-[262px] h-[176px] pointer-events-none">
        <svg viewBox="4 102 262 176" className="absolute inset-0 size-full overflow-visible drop-shadow-[3px_4px_3px_rgba(0,0,0,0.5)]">
            <defs>
                <linearGradient id="bubble" x1="0" y1="0" x2="0" y2="1">
                    <stop offset="0" stopColor="#5c9ff5" />
                    <stop offset="0.3" stopColor="#1f6fe6" />
                    <stop offset="0.6" stopColor="#0a5be2" />
                    <stop offset="1" stopColor="#2c7cf0" />
                </linearGradient>
            </defs>
            <path
                d="M92 249C170 264 261 234 261 181C261 139 208 106 138 106C66 106 8 138 8 180C8 205 28 225 58 237C62 258 80 274 105 273C93 268 86 257 92 249Z"
                fill="url(#bubble)"
                stroke="#b4cbe4"
                strokeWidth="2"
            />
        </svg>
        <p className="relative pt-[49px] pr-1 text-center text-[21px] leading-[28px] font-light text-[#e4fffa] whitespace-nowrap">
            选择想要在埋件图中<br />显示的图层
        </p>
    </div>
);

export default function App() {
    return (
        <div className="relative h-screen w-full flex flex-col overflow-hidden bg-[#6b6b6b] font-['Noto_Sans_CJK_SC','Noto_Sans',sans-serif]">
            <Header />
            <Ribbon />
            <div className="flex-1 min-h-0 flex pt-[6px]">
                <SidePalette />
                <Workspace />
            </div>
            <StatusBar />
            <LayerDialog />
            <Callout />
            <svg viewBox="0 0 13 20" className="absolute left-[114px] top-[286px] w-[13px] h-5 pointer-events-none">
                <path d="M.5.5v15l3.5-3 3 6.5 2.5-1-3-6.500H12z" fill="#fff" stroke="#222" />
            </svg>
        </div>
    );
}
